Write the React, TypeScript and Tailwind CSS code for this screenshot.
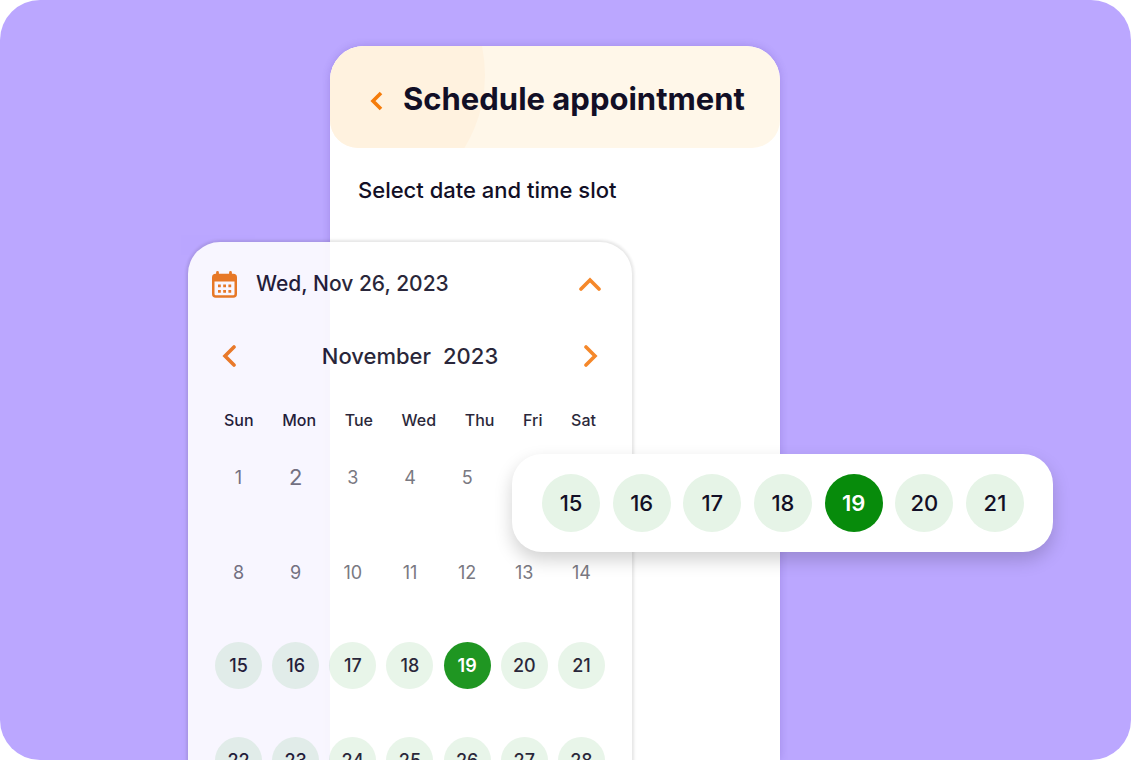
import React, { useState } from "react";
import clsx from "clsx";

const WEEKDAYS = ["Sun", "Mon", "Tue", "Wed", "Thu", "Fri", "Sat"];

const WEEKS = [
  [1, 2, 3, 4, 5, 6, 7],
  [8, 9, 10, 11, 12, 13, 14],
  [15, 16, 17, 18, 19, 20, 21],
  [22, 23, 24, 25, 26, 27, 28],
];

const FIRST_AVAILABLE = 15;

interface ChevronProps {
  d: string;
  width: number;
  height: number;
  cap?: "butt" | "round";
}

function Chevron({ d, width, height, cap = "round" }: ChevronProps) {
  return (
    <svg
      width={width}
      height={height}
      viewBox={`0 0 ${width} ${height}`}
      fill="none"
      stroke="currentColor"
      strokeWidth={3.6}
      strokeLinecap={cap}
      aria-hidden="true"
    >
      <path d={d} />
    </svg>
  );
}

function CalendarIcon() {
  return (
    <svg width="25" height="27" viewBox="0 0 25 27" fill="none" aria-hidden="true">
      <rect x="1.25" y="4" width="22.5" height="21.5" rx="2.5" stroke="#ec7410" strokeWidth="2.5" />
      <path d="M1 4h23v6.500H1z" fill="#ec7410" />
      <path d="M5.500 1.500v4M18.500 1.500v4" stroke="#ec7410" strokeWidth="2.800" strokeLinecap="round" />
      <path
        d="M6 13.500h2.800v2.800H6zM11.200 13.500H14v2.800h-2.800zM16.400 13.500h2.800v2.800h-2.800zM6 19h2.800v2.800H6zM11.200 19H14v2.800h-2.800zM16.400 19h2.800v2.800h-2.800z"
        fill="#ec7410"
      />
    </svg>
  );
}

interface PickerProps {
  selected: number;
  onSelect: (day: number) => void;
}

function CalendarCard({ selected, onSelect }: PickerProps) {
  return (
    <section className="absolute top-[196px] -left-[142px] w-[444px] rounded-[32px] bg-white px-[27px] pt-[22px] pb-10 opacity-90 shadow-[0_0_3px_2px_rgba(0,0,0,0.11)]">
      <div className="-ml-[3px] flex h-10 items-center gap-[19px] pr-1">
        <CalendarIcon />
        <span className="text-[21px] font-medium">Wed, Nov 26, 2023</span>
        <button type="button" aria-label="Collapse calendar" className="ml-auto cursor-pointer text-[#f57c14]">
          <Chevron d="M2 12 11 3l9 9" width={22} height={14} />
        </button>
      </div>

      <div className="mt-8 flex h-10 items-center justify-between pr-[7px] pl-[7px]">
        <button type="button" aria-label="Previous month" className="cursor-pointer text-[#ee7514]">
          <Chevron d="M12 2 3 11l9 9" width={14} height={22} />
        </button>
        <h2 className="flex gap-3 text-[22px] font-medium">
          <span>November</span>
          <span>2023</span>
        </h2>
        <button type="button" aria-label="Next month" className="cursor-pointer text-[#f57c14]">
          <Chevron d="M2 2l9 9-9 9" width={14} height={22} />
        </button>
      </div>

      <table className="mt-8 block">
        <thead className="block">
          <tr className="flex justify-between px-[9px]">
            {WEEKDAYS.map((name) => (
              <th key={name} scope="col" className="text-base leading-6 font-medium">
                {name}
              </th>
            ))}
          </tr>
        </thead>
        <tbody className="mt-5 flex flex-col gap-12">
          {WEEKS.map((week) => (
            <tr key={week[0]} className="flex justify-between">
              {week.map((day) => (
                <td key={day} className="p-0">
                  <button
                    type="button"
                    onClick={() => onSelect(day)}
                    disabled={day < FIRST_AVAILABLE}
                    className={clsx(
                      "flex size-[47px] items-center justify-center rounded-full",
                      day === 2 ? "text-[22px]" : "text-lg",
                      day < FIRST_AVAILABLE && "pt-1 text-[#6c6b74]",
                      day >= FIRST_AVAILABLE && day !== selected && "cursor-pointer bg-[#e6f4e7] font-medium",
                      day === selected && "cursor-pointer bg-[#078b0b] font-semibold text-white"
                    )}
                  >
                    {day}
                  </button>
                </td>
              ))}
            </tr>
          ))}
        </tbody>
      </table>
    </section>
  );
}

function WeekStrip({ selected, onSelect }: PickerProps) {
  return (
    <div className="absolute top-[408px] left-[182px] flex w-[541px] justify-between rounded-[30px] bg-white py-5 pr-[29px] pl-[30px] shadow-[0_8px_18px_rgba(0,0,0,0.18)]">
      {WEEKS[2].map((day) => (
        <button
          key={day}
          type="button"
          onClick={() => onSelect(day)}
          className={clsx(
            "flex size-[58px] cursor-pointer items-center justify-center rounded-full text-[22px]",
            day === selected ? "bg-[#078b0b] font-semibold text-white" : "bg-[#e6f4e7] font-medium"
          )}
        >
          {day}
        </button>
      ))}
    </div>
  );
}

export default function App() {
  const [selected, setSelected] = useState(19);

  return (
    <main className="flex h-screen justify-center overflow-hidden rounded-[40px] bg-[#bba7ff] pt-[46px] font-['Inter',sans-serif] text-[#120f26]">
      <div className="relative mr-[21px] w-[450px] shrink-0 rounded-t-[34px] bg-white shadow-[0_0_8px_rgba(60,30,140,0.2)]">
        <header className="relative flex h-[102px] items-center overflow-hidden rounded-t-[34px] rounded-b-[28px] bg-[#fff7e9] pt-1 pl-10">
          <div className="absolute -top-[111px] -left-[125px] size-[280px] rounded-full bg-[#fff2df]" />
          <button type="button" aria-label="Back" className="relative mt-1 cursor-pointer text-[#f57c0a]">
            <Chevron d="M11 2 3 10l8 8" width={13} height={20} cap="butt" />
          </button>
          <h1 className="relative ml-5 text-[31px] font-bold whitespace-nowrap">Schedule appointment</h1>
        </header>
        <p className="mt-7 ml-7 text-[22px] leading-7 font-medium">Select date and time slot</p>

        <CalendarCard selected={selected} onSelect={setSelected} />
        <WeekStrip selected={selected} onSelect={setSelected} />
      </div>
    </main>
  );
}
